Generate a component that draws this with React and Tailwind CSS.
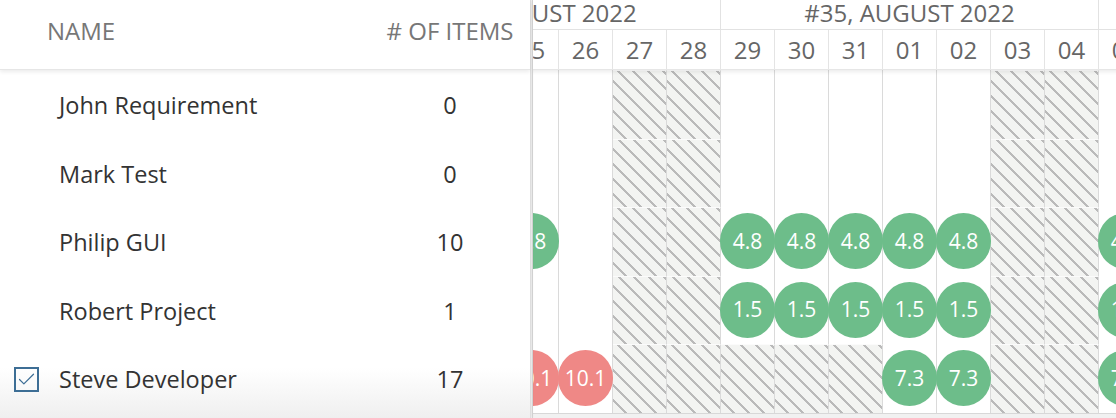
import React from 'react';
import { Check } from 'lucide-react';

const days = ['22', '23', '24', '25', '26', '27', '28', '29', '30', '31', '01', '02', '03', '04', '05', '06'];
const weekend = ['27', '28', '03', '04'];

const people = [
  { name: 'John Requirement', items: 0, cells: {} },
  { name: 'Mark Test', items: 0, cells: {} },
  {
    name: 'Philip GUI',
    items: 10,
    cells: { 22: 'g4.8', 23: 'g4.8', 24: 'g4.8', 25: 'g4.8', 29: 'g4.8', 30: 'g4.8', 31: 'g4.8', '01': 'g4.8', '02': 'g4.8', '05': 'g4.8', '06': 'g4.8' },
  },
  {
    name: 'Robert Project',
    items: 1,
    cells: { 29: 'g1.5', 30: 'g1.5', 31: 'g1.5', '01': 'g1.5', '02': 'g1.5', '05': 'g1.5', '06': 'g1.5' },
  },
  {
    name: 'Steve Developer',
    items: 17,
    checked: true,
    off: ['29', '30', '31'],
    cells: { 22: 'r10.1', 23: 'r10.1', 24: 'r10.1', 25: 'r10.1', 26: 'r10.1', '01': 'g7.3', '02': 'g7.3', '05': 'g7.3', '06': 'g7.3' },
  },
];

const hatch =
  'bg-[repeating-linear-gradient(45deg,#f3f4f2_0px,#f3f4f2_8px,#bababa_8px,#bababa_10.6px)]';

function DayCell({ value, hatched }) {
  return (
    <div
      className={`w-[54px] h-full shrink-0 border-r border-[#dadada] flex items-center justify-center ${
        hatched ? hatch + ' border-t border-t-[#fbfbfb]' : 'bg-white'
      }`}
    >
      {value && (
        <div
          className={`w-[55px] h-[56px] shrink-0 rounded-full flex items-center justify-center text-white text-[21px] ${
            value[0] === 'g' ? 'bg-[#6dbd8a]' : 'bg-[#ef8886]'
          }`}
        >
          {value.slice(1)}
        </div>
      )}
    </div>
  );
}

export default function App() {
  return (
    <div className="w-[1116px] h-[418px] flex overflow-hidden bg-[#f1f1f1] font-['Open_Sans','Noto_Sans',sans-serif]">
      {/* left list */}
      <div className="w-[531px] shrink-0 flex flex-col border-r border-[#dedede] bg-[linear-gradient(to_bottom,#ffffff_88%,#efefef)] z-10 shadow-[1px_0_3px_rgba(0,0,0,0.06)]">
        <div className="h-[70px] shrink-0 flex items-center pb-[8px] bg-white border-b border-[#e6e6e6] shadow-[0_2px_4px_rgba(0,0,0,0.08)] text-[24px] text-[#777]">
          <span className="pl-[47px] flex-1">NAME</span>
          <span className="w-[140px] text-center mr-[10px] whitespace-nowrap">#&nbsp;OF ITEMS</span>
        </div>
        {people.map((p) => (
          <div key={p.name} className="h-[68.5px] shrink-0 flex items-center pt-[3px] text-[23.5px] text-[#333]">
            <div className="w-[59px] shrink-0 flex justify-center pr-[6px]">
              {p.checked && (
                <div className="w-[25px] h-[25px] border-2 border-[#3d6e95] flex items-center justify-center">
                  <Check size={21} strokeWidth={1.4} className="text-[#3d6e95]" />
                </div>
              )}
            </div>
            <span className="flex-1">{p.name}</span>
            <span className="w-[140px] text-center mr-[10px]">{p.items}</span>
          </div>
        ))}
      </div>

      {/* timeline */}
      <div className="flex-1 ml-px overflow-hidden border-l border-[#d6d6d6]">
        <div className="ml-[-190px] w-max flex flex-col">
          <div className="h-[70px] flex flex-col bg-white border-b border-[#e6e6e6] shadow-[0_2px_4px_rgba(0,0,0,0.08)] relative z-10 text-[#666]">
            <div className="h-[30px] flex border-b border-[#e2e2e2] text-[24px]">
              <div className="w-[378px] border-r border-[#e2e2e2] flex items-center justify-center leading-none pb-[4px] whitespace-nowrap">#34, AUGUST 2022</div>
              <div className="w-[378px] border-r border-[#e2e2e2] flex items-center justify-center leading-none pb-[4px] whitespace-nowrap">#35, AUGUST 2022</div>
              <div className="w-[108px]" />
            </div>
            <div className="flex-1 flex text-[24px]">
              {days.map((d) => (
                <div key={d} className="w-[54px] border-r border-[#e4e4e4] flex items-center justify-center">
                  {d}
                </div>
              ))}
            </div>
          </div>
          {people.map((p) => (
            <div key={p.name} className="h-[68.5px] flex">
              {days.map((d) => (
                <DayCell
                  key={d}
                  value={p.cells[d]}
                  hatched={weekend.includes(d) || (p.off || []).includes(d)}
                />
              ))}
            </div>
          ))}
          <div className="h-px bg-[#d8d8d8]" />
        </div>
      </div>
    </div>
  );
}
